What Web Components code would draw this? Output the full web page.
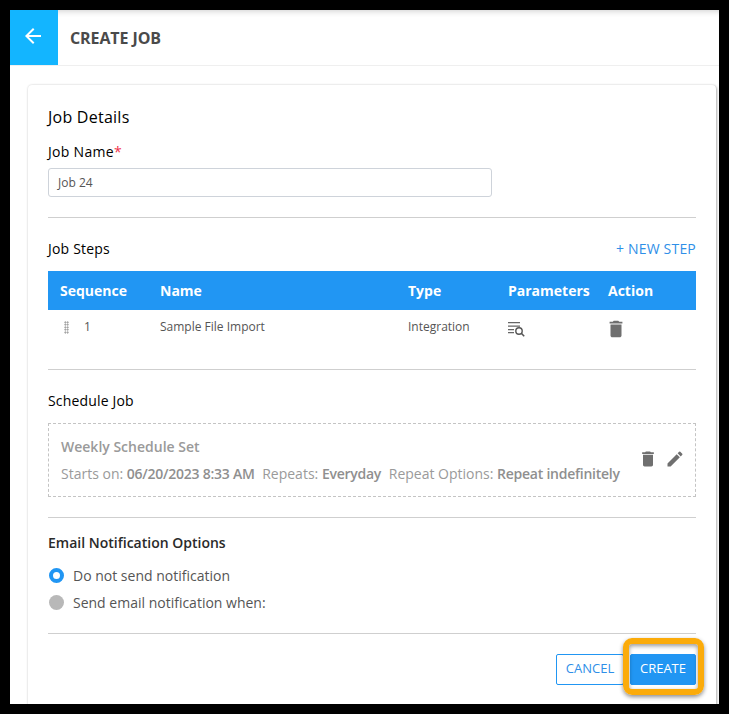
<!DOCTYPE html>
<html>
<head>
<meta charset="utf-8">
<title>Create Job</title>
<style>
    html, body { margin: 0; height: 714px; overflow: hidden; background: #000; }
    body { font-family: "Open Sans", "Noto Sans", sans-serif; }
</style>
</head>
<body>
<job-page>
    <job-header slot="header" title-text="CREATE JOB"></job-header>
    <job-card>
        <job-details></job-details>
        <job-rule></job-rule>
        <job-steps></job-steps>
        <job-rule></job-rule>
        <job-schedule></job-schedule>
        <job-rule></job-rule>
        <job-email></job-email>
        <job-rule></job-rule>
        <job-actions></job-actions>
    </job-card>
</job-page>

<script>
const TRASH = `<svg viewBox="0 0 24 24" width="100%" height="100%"><path fill="#6f6f6f" d="M6 19c0 1.1.9 2 2 2h8c1.1 0 2-.9 2-2V7H6v12zM19 4h-3.5l-1-1h-5l-1 1H5v2h14V4z"/></svg>`;
const PENCIL = `<svg viewBox="0 0 24 24" width="100%" height="100%"><path fill="#6f6f6f" d="M3 17.25V21h3.75L17.81 9.94l-3.75-3.75L3 17.25zM20.71 7.04a1 1 0 0 0 0-1.41l-2.34-2.34a1 1 0 0 0-1.41 0l-1.83 1.83 3.75 3.75 1.83-1.83z"/></svg>`;

class JobPage extends HTMLElement {
    constructor(){
        super();
        this.attachShadow({mode:'open'});
        this.shadowRoot.innerHTML = `
            <style>
                :host{
                    display:block;
                    position:absolute;
                    top:10px;
                    left:10px;
                    width:709px;
                    height:694px;
                    background:#fff;
                    overflow:hidden;
                }
                .main{ padding:19px 3px 0 18px; }
            </style>
            <slot name="header"></slot>
            <div class="main"><slot></slot></div>
        `;
    }
}

class JobHeader extends HTMLElement {
    connectedCallback(){
        this.attachShadow({mode:'open'});
        this.shadowRoot.innerHTML = `
            <style>
                :host{
                    display:flex;
                    height:55px;
                    align-items:center;
                    border-bottom:1px solid #efefef;
                    box-shadow:inset 0 6px 6px -5px rgba(0,0,0,.2);
                }
                .back{
                    width:48px;
                    height:55px;
                    background:#13b5ff;
                    display:flex;
                    align-items:center;
                    justify-content:center;
                }
                .back svg{ margin:-3px 0 0 -2px; }
                h1{
                    margin:0 0 0 12px;
                    font:700 16px/20px "Open Sans", sans-serif;
                    letter-spacing:-.1px;
                    color:#4a4a4a;
                }
            </style>
            <div class="back">
                <svg width="24" height="24" viewBox="0 0 24 24"><path fill="#fff" d="M20 11H7.83l5.59-5.59L12 4l-8 8 8 8 1.41-1.41L7.83 13H20z"/></svg>
            </div>
            <h1>${this.getAttribute('title-text')}</h1>
        `;
    }
}

class JobCard extends HTMLElement {
    constructor(){
        super();
        this.attachShadow({mode:'open'});
        this.shadowRoot.innerHTML = `
            <style>
                :host{
                    display:block;
                    background:#fff;
                    border-radius:4px;
                    padding:20px 20px 40px 20px;
                    box-shadow:1px 1px 3px rgba(0,0,0,.3), 0 0 2px rgba(0,0,0,.12);
                }
            </style>
            <slot></slot>
        `;
    }
}

class JobRule extends HTMLElement {
    constructor(){
        super();
        this.attachShadow({mode:'open'});
        this.shadowRoot.innerHTML = `
            <style>
                :host{ display:block; height:1px; background:#cfcfcf; }
            </style>
        `;
    }
}

class JobDetails extends HTMLElement {
    constructor(){
        super();
        this.attachShadow({mode:'open'});
        this.shadowRoot.innerHTML = `
            <style>
                :host{ display:block; height:112px; color:#000; font-family:"Open Sans", sans-serif; }
                h2{ margin:0; font-size:16px; line-height:24px; font-weight:500; letter-spacing:.25px; }
                label{ display:block; margin-top:13px; font-size:14px; line-height:20px; font-weight:500; letter-spacing:.3px; }
                label span{ color:#f0324b; }
                .input{
                    box-sizing:border-box;
                    width:444px;
                    height:29px;
                    margin-top:6px;
                    padding:0 9px;
                    border:1px solid #ced3da;
                    border-radius:3px;
                    font-size:12px;
                    line-height:27px;
                    color:#555;
                }
            </style>
            <h2>Job Details</h2>
            <label>Job Name<span>*</span></label>
            <div class="input">Job 24</div>
        `;
    }
}

class JobSteps extends HTMLElement {
    constructor(){
        super();
        this.attachShadow({mode:'open'});
        this.shadowRoot.innerHTML = `
            <style>
                :host{ display:block; height:151px; font-family:"Open Sans", sans-serif; }
                .top{
                    display:flex;
                    justify-content:space-between;
                    align-items:center;
                    height:20px;
                    padding-top:21px;
                    font-size:14px;
                    line-height:20px;
                    font-weight:500;
                    letter-spacing:.2px;
                    color:#000;
                }
                .new{ color:#2f8fe8; }
                .row{
                    display:grid;
                    grid-template-columns:100px 248px 100px 100px 1fr;
                    padding-left:12px;
                    align-items:center;
                }
                .head{
                    margin-top:12px;
                    height:39px;
                    background:#2196f3;
                    color:#fff;
                    font-size:14px;
                    line-height:20px;
                    font-weight:700;
                }
                .body{
                    height:34px;
                    font-size:12px;
                    line-height:20px;
                    color:#555;
                }
                .seq{ display:flex; align-items:center; gap:15px; padding-left:4px; }
                .grip{
                    width:5px;
                    height:13px;
                    background-image:radial-gradient(#8a8a8a 0.8px, transparent 0.9px);
                    background-size:2.5px 2.5px;
                }
                .icon{ display:block; width:20px; height:20px; margin-top:4px; }
                .trash{ width:22px; height:22px; margin:4px 0 0 -3px; }
            </style>
            <div class="top"><span>Job Steps</span><span class="new">+ NEW STEP</span></div>
            <div class="row head">
                <span>Sequence</span><span>Name</span><span>Type</span><span>Parameters</span><span>Action</span>
            </div>
            <div class="row body">
                <div class="seq"><i class="grip"></i><span>1</span></div>
                <span>Sample File Import</span>
                <span>Integration</span>
                <svg class="icon" viewBox="0 0 20 20">
                    <path fill="#666" d="M0 3h12v1.2H0zM0 6.5h12v1.2H0zM0 10h6v1.2H0zM0 13h6v1.2H0z"/>
                    <circle cx="11" cy="12" r="3.2" fill="none" stroke="#555" stroke-width="1.4"/>
                    <path stroke="#555" stroke-width="1.6" d="M13.3 14.3l2.9 2.9"/>
                </svg>
                <span class="icon trash">${TRASH}</span>
            </div>
        `;
    }
}

class JobSchedule extends HTMLElement {
    constructor(){
        super();
        this.attachShadow({mode:'open'});
        this.shadowRoot.innerHTML = `
            <style>
                :host{ display:block; height:147px; font-family:"Open Sans", sans-serif; }
                h3{
                    margin:0;
                    padding-top:21px;
                    font-size:14px;
                    line-height:20px;
                    font-weight:500;
                    letter-spacing:.17px;
                    color:#000;
                }
                .box{
                    box-sizing:border-box;
                    display:flex;
                    align-items:center;
                    justify-content:space-between;
                    height:74px;
                    margin-top:12px;
                    padding:0 12px;
                    border:1px dashed #c4c4c4;
                    color:#9a9a9a;
                }
                .name{ font-size:14px; line-height:20px; font-weight:600; }
                .info{ margin-top:7px; font-size:14px; line-height:20px; white-space:nowrap; }
                .info b{ font-weight:600; color:#8f8f8f; margin-right:4px; letter-spacing:-.25px; }
                .tools{ display:flex; gap:7px; margin:-2px -2px 0 0; }
                .tools span{ display:block; width:20px; height:20px; }
            </style>
            <h3>Schedule Job</h3>
            <div class="box">
                <div>
                    <div class="name">Weekly Schedule Set</div>
                    <div class="info">Starts on: <b>06/20/2023 8:33 AM</b> Repeats: <b>Everyday</b> Repeat Options: <b>Repeat indefinitely</b></div>
                </div>
                <div class="tools"><span>${TRASH}</span><span>${PENCIL}</span></div>
            </div>
        `;
    }
}

class JobRadio extends HTMLElement {
    connectedCallback(){
        const on = this.hasAttribute('checked');
        this.attachShadow({mode:'open'});
        this.shadowRoot.innerHTML = `
            <style>
                :host{
                    display:flex;
                    align-items:center;
                    gap:9px;
                    height:27px;
                    padding-left:1px;
                    font-family:"Open Sans", sans-serif;
                    font-size:14px;
                    line-height:20px;
                    color:#555;
                }
                i{
                    box-sizing:border-box;
                    width:15px;
                    height:15px;
                    border-radius:50%;
                    background:${on ? '#fff' : '#b8b8b8'};
                    border:${on ? '4px solid #2196f3' : 'none'};
                }
            </style>
            <i></i><slot></slot>
        `;
    }
}

class JobEmail extends HTMLElement {
    constructor(){
        super();
        this.attachShadow({mode:'open'});
        this.shadowRoot.innerHTML = `
            <style>
                :host{ display:block; height:115px; font-family:"Open Sans", sans-serif; }
                h3{
                    margin:0 0 9px;
                    padding-top:15px;
                    font-size:14px;
                    line-height:20px;
                    font-weight:600;
                    color:#2a2a2a;
                }
            </style>
            <h3>Email Notification Options</h3>
            <div>
                <job-radio checked>Do not send notification</job-radio>
                <job-radio>Send email notification when:</job-radio>
            </div>
        `;
    }
}

class JobActions extends HTMLElement {
    constructor(){
        super();
        this.attachShadow({mode:'open'});
        this.shadowRoot.innerHTML = `
            <style>
                :host{
                    display:flex;
                    justify-content:flex-end;
                    gap:6px;
                    padding-top:20px;
                }
                button{
                    box-sizing:border-box;
                    height:31px;
                    padding:0 0 2px;
                    border:1px solid #2196f3;
                    border-radius:2px;
                    font-family:"Open Sans", sans-serif;
                    font-size:13px;
                    line-height:27px;
                    font-weight:500;
                    background:#fff;
                    color:#2f8fe8;
                }
                .cancel{ width:68px; }
                .create{ width:66px; background:#2196f3; color:#fff; }
                .wrap{ position:relative; }
                .mark{
                    position:absolute;
                    top:-16px;
                    left:-7px;
                    width:81px;
                    height:57px;
                    box-sizing:border-box;
                    border:6px solid #fbab0a;
                    border-radius:9px;
                    box-shadow:0 2px 4px rgba(0,0,0,.45), inset 0 2px 4px rgba(0,0,0,.4);
                }
            </style>
            <button class="cancel">CANCEL</button>
            <div class="wrap">
                <button class="create">CREATE</button>
                <div class="mark"></div>
            </div>
        `;
    }
}

customElements.define('job-page', JobPage);
customElements.define('job-header', JobHeader);
customElements.define('job-card', JobCard);
customElements.define('job-rule', JobRule);
customElements.define('job-details', JobDetails);
customElements.define('job-steps', JobSteps);
customElements.define('job-schedule', JobSchedule);
customElements.define('job-radio', JobRadio);
customElements.define('job-email', JobEmail);
customElements.define('job-actions', JobActions);
</script>
</body>
</html>
